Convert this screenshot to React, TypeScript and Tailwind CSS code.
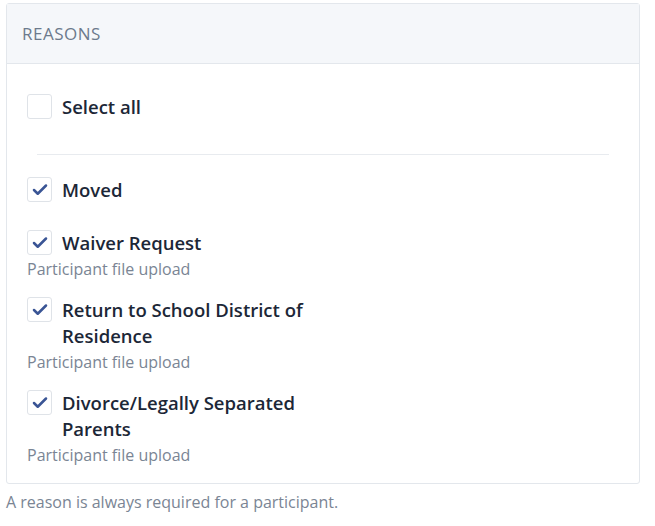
import { Check } from 'lucide-react'

type Reason = {
  label: string
  note?: string
}

const reasons: Reason[] = [
  { label: 'Moved' },
  { label: 'Waiver Request', note: 'Participant file upload' },
  { label: 'Return to School District of Residence', note: 'Participant file upload' },
  { label: 'Divorce/Legally Separated Parents', note: 'Participant file upload' },
]

function Box({ checked }: { checked: boolean }) {
  return (
    <span className="flex h-[25px] w-[25px] shrink-0 items-center justify-center rounded-[3px] border border-[#dfe3e8] bg-white">
      {checked && <Check className="h-[18px] w-[18px] text-[#3a5595]" strokeWidth={3.4} />}
    </span>
  )
}

export default function App() {
  return (
    <div className="bg-white px-[6px] pt-[3px] font-['Open_Sans',sans-serif]">
      <div className="w-[634px] rounded-[3px] border border-[#e3e7ec]">
        {/* Header */}
        <div className="flex h-[60px] items-center border-b border-[#e3e7ec] bg-[#f5f7fa] px-[15px]">
          <span className="text-[17px] tracking-[0.5px] text-[#6c7a8c]">REASONS</span>
        </div>

        <div className="px-[20px] pb-[15px] pt-[30px]">
          <label className="flex items-center gap-[10px]">
            <Box checked={false} />
            <span className="text-[18.5px] font-semibold leading-[25px] text-[#1c2737]">Select all</span>
          </label>

          <div className="mx-[10px] mb-[22px] mt-[35px] h-px bg-[#e8ebef]" />

          <div className="flex flex-col gap-[15px]">
            {reasons.map(r => (
              <div key={r.label} className={r.note ? '' : 'mb-[12px]'}>
                <label className="flex items-start gap-[10px]">
                  <Box checked />
                  <span className="max-w-[260px] text-[18.5px] font-semibold leading-[26px] text-[#1c2737]">{r.label}</span>
                </label>
                {r.note && (
                  <p className="text-[16px] leading-[26px] text-[#7a8594]">{r.note}</p>
                )}
              </div>
            ))}
          </div>
        </div>
      </div>

      <p className="mt-[6px] text-[16px] text-[#7a8594]">A reason is always required for a participant.</p>
    </div>
  )
}
